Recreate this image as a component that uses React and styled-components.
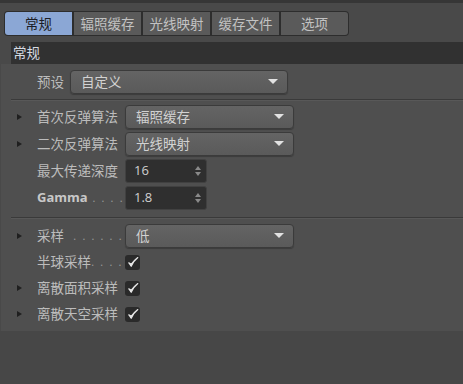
import React from "react";
import styled, { createGlobalStyle } from "styled-components";

const GlobalStyle = createGlobalStyle`
  body {
    margin: 0;
    background-color: #494949;
    font-family: "Noto Sans CJK SC", "Noto Sans", sans-serif;
    font-size: 13.5px;
  }
`;

const Page = styled.div`
  width: 463px;
  height: 384px;
  overflow: hidden;
`;

const TopStrip = styled.div`
  height: 3px;
  background-color: #363636;
`;

const TabBar = styled.div`
  display: inline-flex;
  gap: 2px;
  margin: 8px 0 0 4px;
  padding: 1px;
  background-color: #2d2d2d;
  border-radius: 4px;
`;

const Tab = styled.div`
  width: 67px;
  height: 23px;
  display: flex;
  align-items: center;
  justify-content: center;
  background-color: ${(p) => (p.active ? "#8ba7d5" : "#5a5a5a")};
  color: ${(p) => (p.active ? "#1b1d26" : "#c2c2c2")};
  border-radius: ${(p) => (p.first ? "3px 0 0 3px" : p.last ? "0 3px 3px 0" : "0")};
  line-height: 1;
`;

const SectionHeader = styled.div`
  height: 22px;
  margin: 6px 0 0 11px;
  padding-left: 2px;
  display: flex;
  align-items: center;
  background-color: #313131;
  color: #d6dbe2;
  line-height: 1;
`;

const Panel = styled.div`
  margin-left: 1px;
  padding: 4px 0 4px 0;
  background-color: #4f4f4f;
`;

const Row = styled.div`
  height: ${(p) => p.h || 27}px;
  display: flex;
  align-items: center;
  padding-left: 16px;
`;

const Arrow = styled.div`
  width: 20px;
  flex-shrink: 0;
  &::before {
    content: "";
    display: ${(p) => (p.show ? "block" : "none")};
    width: 0;
    height: 0;
    border-top: 3.5px solid transparent;
    border-bottom: 3.5px solid transparent;
    border-left: 5px solid #1f1f1f;
  }
`;

const Label = styled.div`
  width: ${(p) => p.w || 88}px;
  flex-shrink: 0;
  display: flex;
  align-items: center;
  color: #bcbcbc;
  white-space: nowrap;
  line-height: 1;
`;

const LatinLabel = styled.span`
  font-family: "Open Sans", "Liberation Sans", sans-serif;
  font-weight: 700;
  font-size: 13px;
  color: #c8c8c8;
`;

const Dots = styled.span`
  font-family: "Liberation Sans", sans-serif;
  font-size: 12px;
  color: #969696;
  letter-spacing: 1.2px;
`;

const Select = styled.div`
  width: ${(p) => p.w}px;
  height: 24px;
  box-sizing: border-box;
  display: flex;
  align-items: center;
  justify-content: space-between;
  padding: 0 9px 0 10px;
  background: linear-gradient(#646464, #5a5a5a);
  border: 1px solid #3b3b3b;
  border-radius: 4px;
  box-shadow: 0 1px 1px rgba(0, 0, 0, 0.25);
  color: #d2d2d2;
  line-height: 1;
`;

const Caret = styled.span`
  width: 0;
  height: 0;
  border-left: 5px solid transparent;
  border-right: 5px solid transparent;
  border-top: 5px solid #e2e2e2;
`;

const NumberField = styled.div`
  width: 82px;
  height: 24px;
  box-sizing: border-box;
  display: flex;
  align-items: center;
  justify-content: space-between;
  padding: 0 5px 0 8px;
  background-color: #2f2f2f;
  border: 1px solid #414141;
  border-radius: 3px;
  color: #cfcfcf;
  font-family: "Open Sans", "Liberation Sans", sans-serif;
  font-size: 13px;
  line-height: 1;
`;

const Spinner = styled.div`
  display: flex;
  flex-direction: column;
  gap: 2px;
  &::before,
  &::after {
    content: "";
    width: 0;
    height: 0;
    border-left: 3px solid transparent;
    border-right: 3px solid transparent;
  }
  &::before {
    border-bottom: 4px solid #8a8a8a;
  }
  &::after {
    border-top: 4px solid #8a8a8a;
  }
`;

const Check = styled.div`
  width: 15px;
  height: 15px;
  display: flex;
  align-items: center;
  justify-content: center;
  background-color: #2a2a2a;
  border-radius: 3px;
`;

const Separator = styled.div`
  height: 1px;
  margin: ${(p) => p.m};
  margin-left: 10px;
  background-color: #3a3a3a;
  box-shadow: 0 1px 0 #585858;
`;

const Bottom = styled.div`
  height: 53px;
  background-color: #474747;
`;

const tabs = ["常规", "辐照缓存", "光线映射", "缓存文件", "选项"];

function CheckBox() {
  return (
    <Check>
      <svg width="12" height="12" viewBox="0 0 12 12">
        <path
          d="M1.8 6.8 Q3 8 4.2 10.3 Q6.5 5 10.8 1.6 Q7 4.5 4.4 8.2 Z"
          fill="#e6e6e6"
          stroke="#e6e6e6"
          strokeWidth="1.2"
          strokeLinejoin="round"
        />
      </svg>
    </Check>
  );
}

export default function App() {
  return (
    <Page>
      <GlobalStyle />
      <TopStrip />
      <TabBar>
        {tabs.map((t, i) => (
          <Tab key={t} active={i === 0} first={i === 0} last={i === tabs.length - 1}>
            {t}
          </Tab>
        ))}
      </TabBar>
      <SectionHeader>常规</SectionHeader>
      <Panel>
        <Row>
          <Arrow />
          <Label w={33}>预设</Label>
          <Select w={218}>
            自定义
            <Caret />
          </Select>
        </Row>
        <Separator m="4px 0 3px 0" />
        <Row>
          <Arrow show />
          <Label>首次反弹算法</Label>
          <Select w={169}>
            辐照缓存
            <Caret />
          </Select>
        </Row>
        <Row>
          <Arrow show />
          <Label>二次反弹算法</Label>
          <Select w={169}>
            光线映射
            <Caret />
          </Select>
        </Row>
        <Row>
          <Arrow />
          <Label>最大传递深度</Label>
          <NumberField>
            16
            <Spinner />
          </NumberField>
        </Row>
        <Row>
          <Arrow />
          <Label>
            <LatinLabel>Gamma</LatinLabel>
            <Dots>&nbsp;.&nbsp;.&nbsp;.&nbsp;.</Dots>
          </Label>
          <NumberField>
            1.8
            <Spinner />
          </NumberField>
        </Row>
        <Separator m="6px 0 4px 0" />
        <Row>
          <Arrow show />
          <Label>
            采样<Dots>&nbsp;&nbsp;.&nbsp;.&nbsp;.&nbsp;.&nbsp;.&nbsp;.&nbsp;.</Dots>
          </Label>
          <Select w={169}>
            低
            <Caret />
          </Select>
        </Row>
        <Row h={26}>
          <Arrow />
          <Label>
            半球采样<Dots>.&nbsp;.&nbsp;.&nbsp;.</Dots>
          </Label>
          <CheckBox />
        </Row>
        <Row h={26}>
          <Arrow show />
          <Label>离散面积采样</Label>
          <CheckBox />
        </Row>
        <Row h={26}>
          <Arrow show />
          <Label>离散天空采样</Label>
          <CheckBox />
        </Row>
      </Panel>
      <Bottom />
    </Page>
  );
}
